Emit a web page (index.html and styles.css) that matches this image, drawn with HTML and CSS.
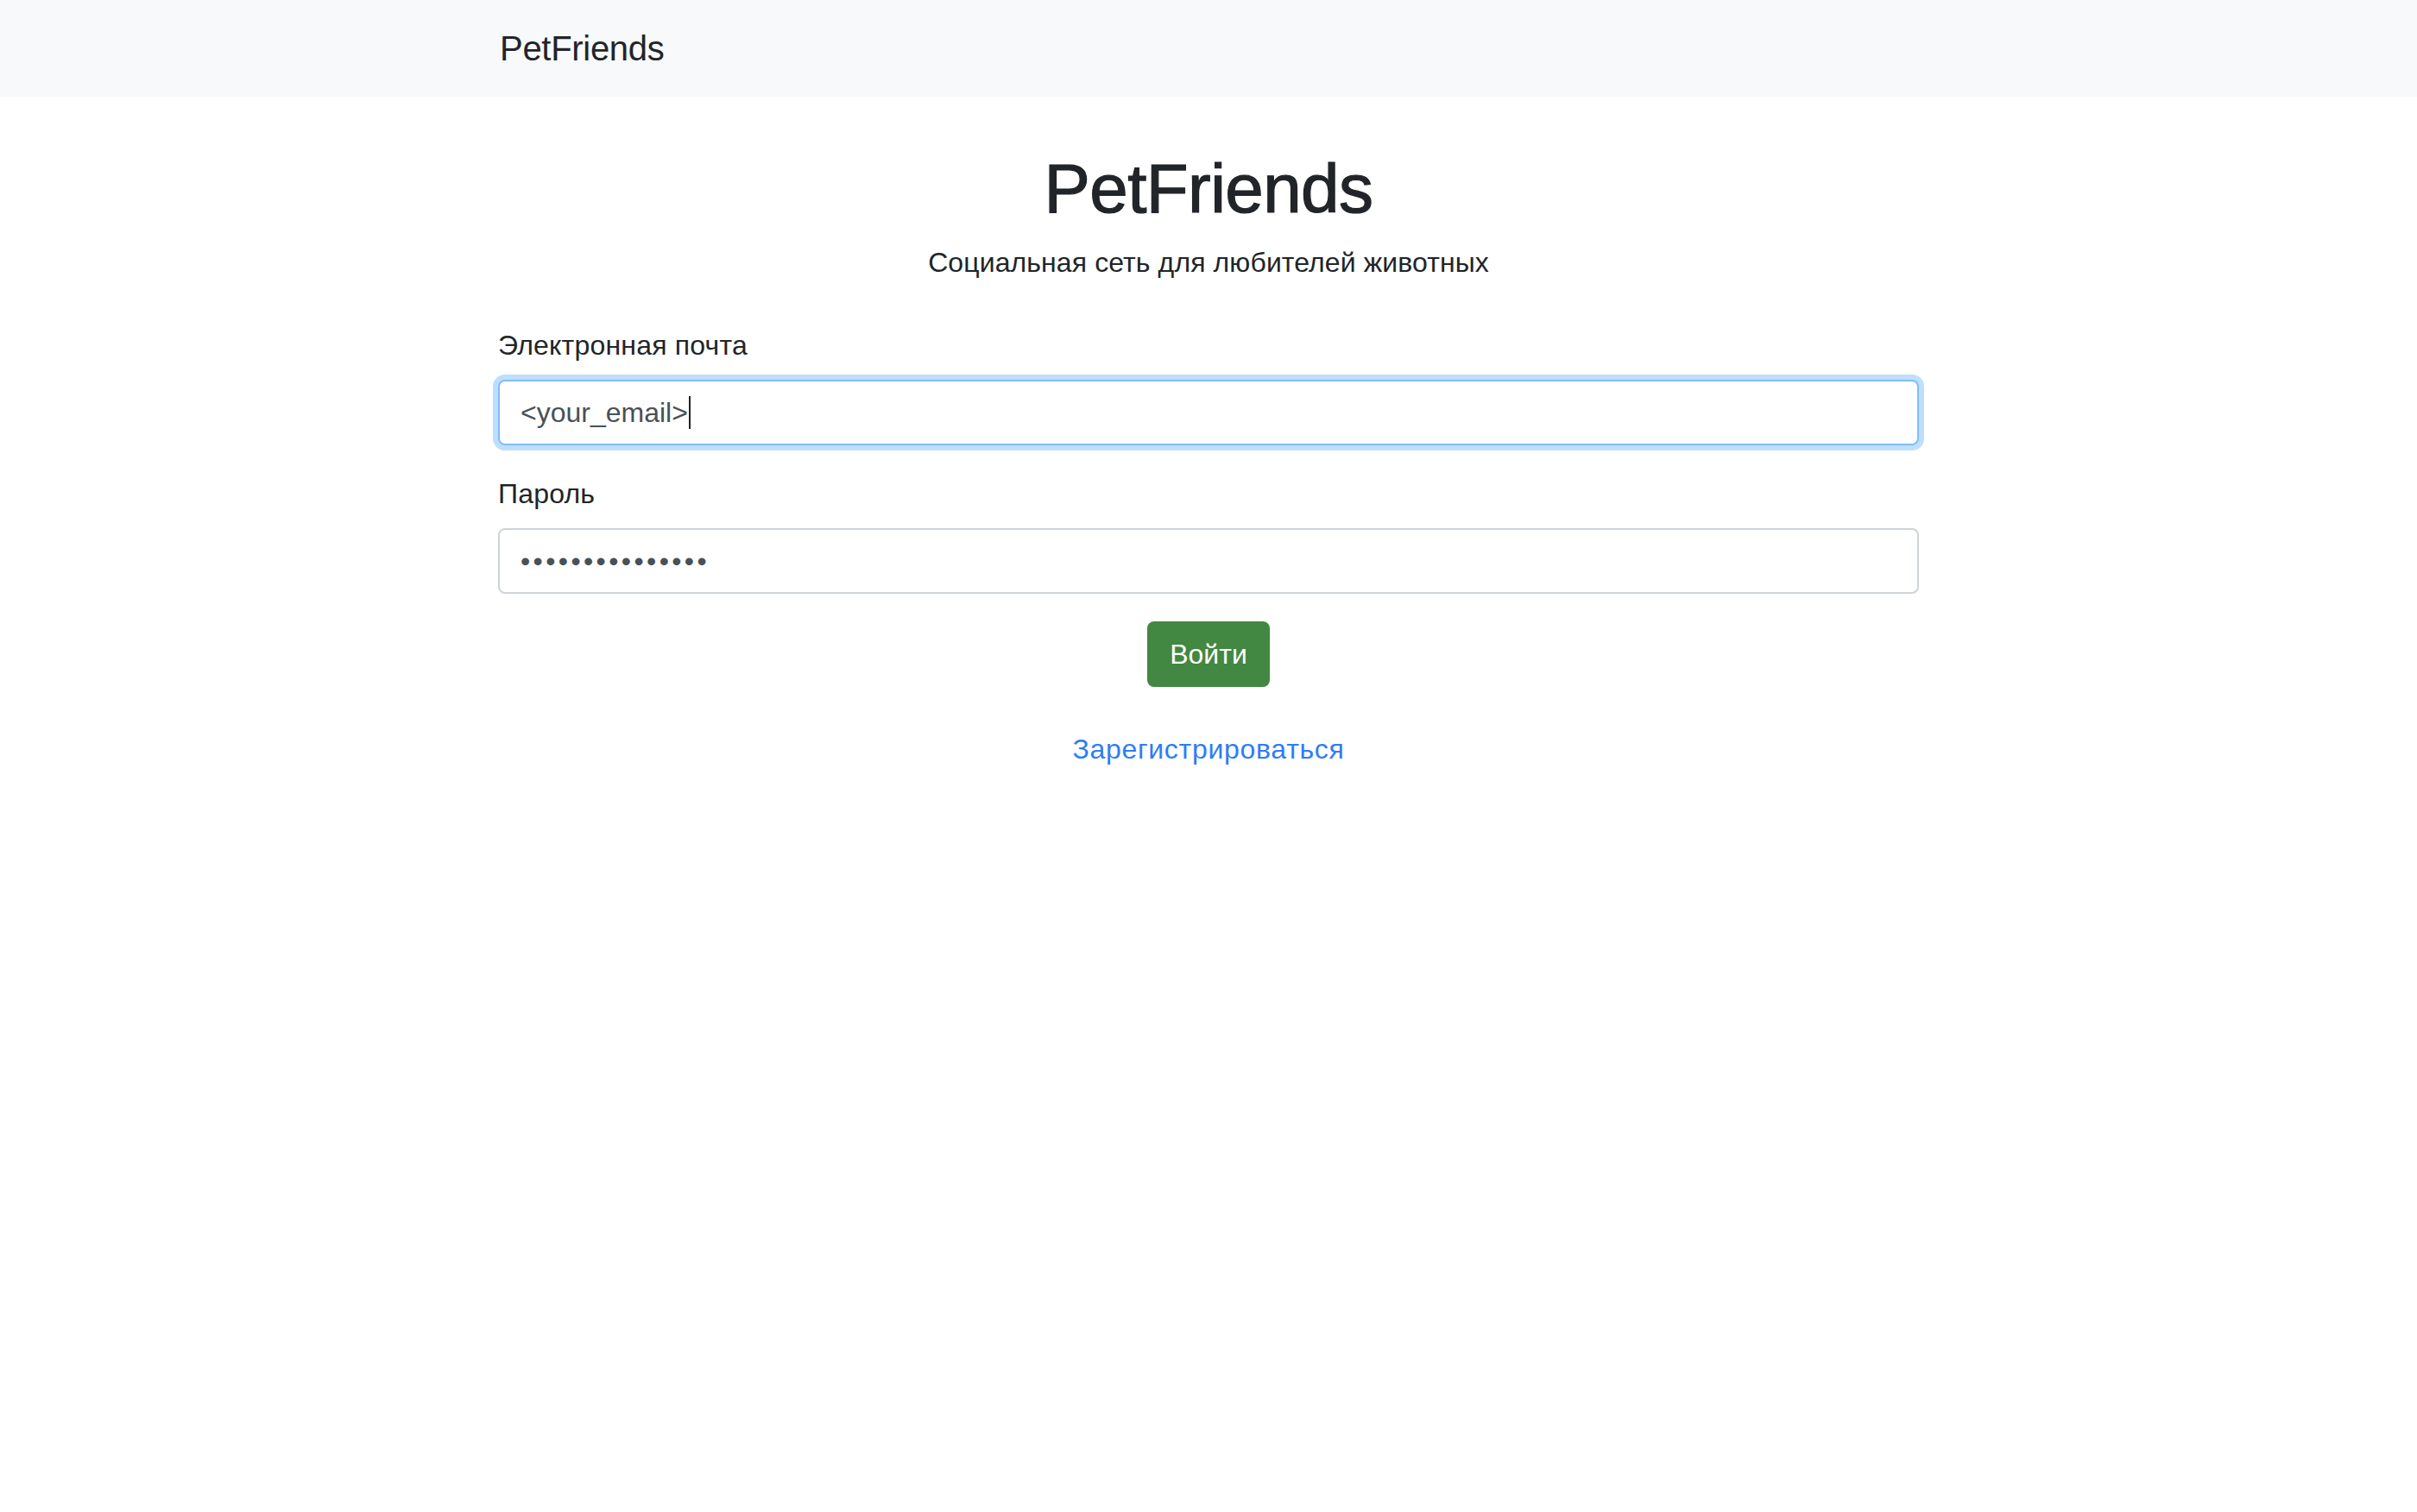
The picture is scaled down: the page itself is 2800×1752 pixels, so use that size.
FILE: index.html
```html
<!DOCTYPE html>
<html lang="ru">
<head>
<meta charset="utf-8">
<title>PetFriends</title>
<link rel="stylesheet" href="styles.css">
</head>
<body>
<nav class="navbar">
  <div class="container">
    <a class="brand" href="#">PetFriends</a>
  </div>
</nav>
<main class="container main">
  <h1 class="title">PetFriends</h1>
  <p class="lead">Социальная сеть для любителей животных</p>
  <form class="form">
    <div class="form-group">
      <label class="label">Электронная почта</label>
      <div class="field field-focus"><span class="value">&lt;your_email&gt;</span><span class="caret"></span></div>
    </div>
    <div class="form-group">
      <label class="label">Пароль</label>
      <div class="field"><span class="dots">•••••••••••••••</span></div>
    </div>
    <div class="actions">
      <button type="button" class="btn">Войти</button>
    </div>
    <div class="register">
      <a class="link" href="#">Зарегистрироваться</a>
    </div>
  </form>
</main>
</body>
</html>
```

FILE: styles.css
```css
* { box-sizing: border-box; }
html, body {
  margin: 0;
  padding: 0;
  background: #ffffff;
}
body {
  font-family: "Liberation Sans", Arial, sans-serif;
  color: #212529;
  font-size: 32px;
  line-height: 48px;
}
.container {
  width: 1646px;
  margin: 0 auto;
}
.navbar {
  background: #f8f9fa;
  height: 112px;
  display: flex;
  align-items: center;
}
.brand {
  display: inline-block;
  font-size: 40px;
  line-height: 60px;
  color: #212529;
  text-decoration: none;
  padding-left: 2px;
  letter-spacing: -0.3px;
}
.main {
  text-align: center;
}
.title {
  margin: 59px 0 13px;
  font-size: 80px;
  line-height: 96px;
  font-weight: 400;
  letter-spacing: -0.6px;
  -webkit-text-stroke: 1.2px #212529;
}
.lead {
  margin: 0 0 48px;
  letter-spacing: 0.1px;
}
.form {
  text-align: left;
}
.form-group {
  margin-bottom: 32px;
}
.label {
  display: block;
  margin-bottom: 16px;
  line-height: 48px;
  letter-spacing: 0.2px;
}
.field {
  height: 76px;
  border: 2px solid #ced4da;
  border-radius: 8px;
  padding: 0 24px;
  display: flex;
  align-items: center;
  color: #495057;
  background: #fff;
}
.field-focus {
  border-color: #80bdff;
  box-shadow: 0 0 0 6px rgba(0, 123, 255, 0.25);
}
.caret {
  display: inline-block;
  width: 2px;
  height: 38px;
  background: #222;
  margin-left: 1px;
}
.dots {
  font-size: 32px;
  letter-spacing: 3.4px;
  color: #495057;
}
.actions {
  display: flex;
  justify-content: center;
}
.btn {
  font-family: inherit;
  font-size: 32px;
  line-height: 48px;
  height: 76px;
  padding: 0 24px;
  color: #fff;
  background: #428742;
  border: 2px solid #428742;
  border-radius: 8px;
  cursor: pointer;
}
.register {
  margin-top: 48px;
  text-align: center;
}
.link {
  color: #2f7cf6;
  text-decoration: none;
  letter-spacing: 0.7px;
}
```
